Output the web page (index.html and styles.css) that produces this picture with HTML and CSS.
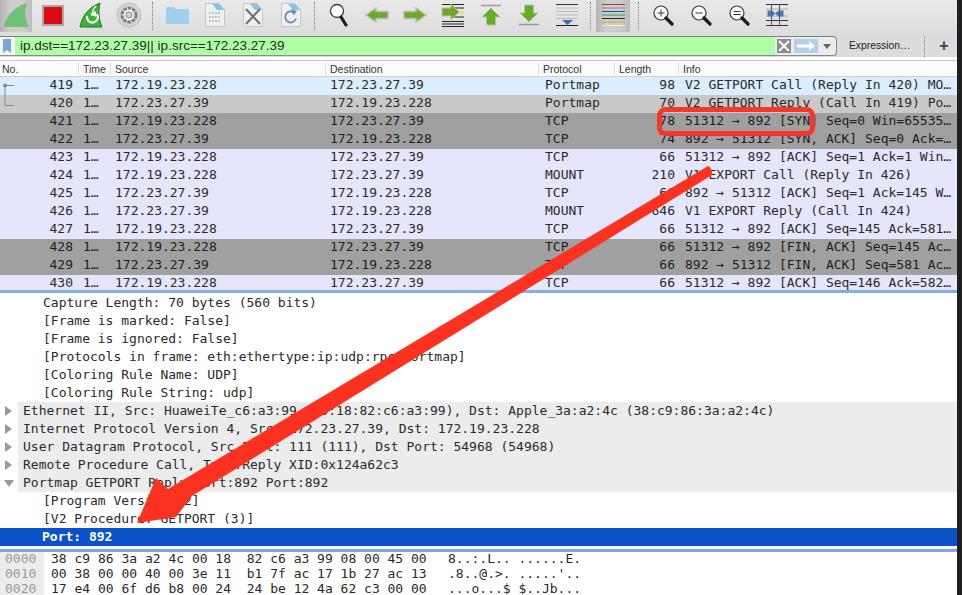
FILE: index.html
```html
<!DOCTYPE html>
<html lang="en">
<head>
<meta charset="utf-8">
<title>Wireshark</title>
<link rel="stylesheet" href="styles.css">
</head>
<body>
<div class="app">
  <div class="toolbar">
    <div class="tool pressed"><svg width="26" height="24" viewBox="0 0 26 24"><path d="M1 24C3 13 11 4 24 0C21 8 22 17 26 24Z" fill="#6fc270" stroke="#9cb59c" stroke-width=".5"/></svg></div>
    <div class="tool"><svg width="22" height="21" viewBox="0 0 22 21"><rect x="1" y="1" width="20" height="19" fill="#dc0b12" stroke="#a8a8a8" stroke-width="2"/></svg></div>
    <div class="tool"><svg width="24" height="26" viewBox="0 0 24 26"><path d="M1 25C3 14 10 5 21 1C19 9 20 18 23 25Z" fill="#34b534" stroke="#2f6f2f"/><path d="M17 4C14 7 13 11 13 14" stroke="#e8f5e8" fill="none" stroke-width="1.500"/><path d="M8 14a5.500 5.500 0 1 0 10-2" fill="none" stroke="#fff" stroke-width="2.200"/><path d="M11 12l5.500-3 1 6z" fill="#fff"/></svg></div>
    <div class="tool"><svg width="26" height="26" viewBox="0 0 26 26"><circle cx="13" cy="13" r="12" fill="#d4d4d4" stroke="#bdbdbd"/><circle cx="13" cy="13" r="7" fill="#efefef" stroke="#7f7f7f" stroke-width="3" stroke-dasharray="3.500 1"/><circle cx="13" cy="13" r="3" fill="#d4d4d4" stroke="#8a8a8a"/></svg></div>
    <div class="sep"></div>
    <div class="tool"><svg width="23" height="17" viewBox="0 0 23 17"><path d="M0 17V1l1-1h7l2 2h12l1 1v14z" fill="#9fd1ee"/></svg></div>
    <div class="tool"><svg width="20" height="24" viewBox="0 0 20 24"><path d="M.5.500h13l6 6v17H.5z" fill="#eff1ef" stroke="#bfc6cc"/><path d="M4 10h12M4 14h12M4 18h12" stroke="#8f9a9a" stroke-dasharray="2 1"/><path d="M7 1h7l5 6h-7z" fill="#86c3e6"/></svg></div>
    <div class="tool"><svg width="20" height="24" viewBox="0 0 20 24"><path d="M.5.500h13l6 6v17H.5z" fill="#eff1ef" stroke="#bfc6cc"/><path d="M7 1h7l5 6h-7z" fill="#86c3e6"/><path d="M3 6l14 15M17 6L3 21" stroke="#6f6f6f" stroke-width="2"/></svg></div>
    <div class="tool"><svg width="20" height="24" viewBox="0 0 20 24"><path d="M.5.500h13l6 6v17H.5z" fill="#eff1ef" stroke="#bfc6cc"/><path d="M7 1h7l5 6h-7z" fill="#86c3e6"/><path d="M15 15.500a5.500 5.500 0 1 1-2-6" fill="none" stroke="#6f8fb8" stroke-width="2"/><path d="M10 6l6 2-3.500 4.500z" fill="#6f8fb8"/></svg></div>
    <div class="sep"></div>
    <div class="tool"><svg width="20" height="24" viewBox="0 0 20 24"><circle cx="8" cy="8" r="6.500" fill="#fff" stroke="#3a3a3a" stroke-width="1.300"/><path d="M12 14l5 8" stroke="#1d1d1d" stroke-width="3.200" stroke-linecap="round"/></svg></div>
    <div class="tool"><svg width="24" height="16" viewBox="0 0 24 16"><path d="M1 8l10-7v3.500h12v7H11V15z" fill="#6aaa24" stroke="#b9bfb0" stroke-width="1.500"/></svg></div>
    <div class="tool"><svg width="24" height="16" viewBox="0 0 24 16"><path d="M23 8L13 1v3.500H1v7h12V15z" fill="#6aaa24" stroke="#b9bfb0" stroke-width="1.500"/></svg></div>
    <div class="tool"><svg width="24" height="24" viewBox="0 0 24 24"><path d="M1 1.500h22M1 18.500h22M1 21h22M1 23.500h22" stroke="#222"/><path d="M11 5h12M11 14h12" stroke="#222"/><path d="M1 13V5h9V1l8 8-8 8v-4z" fill="#6aaa24" stroke="#b9bfb0"/><path d="M18 8h5v3h-5z" fill="#efe27a"/></svg></div>
    <div class="tool"><svg width="22" height="22" viewBox="0 0 22 22"><path d="M1 1.500h20" stroke="#9a9a9a" stroke-width="1.500"/><path d="M11 4l9 9h-4.500v8h-9v-8H2z" fill="#62b022" stroke="#b9bfb0"/></svg></div>
    <div class="tool"><svg width="22" height="22" viewBox="0 0 22 22"><path d="M1 20.500h20" stroke="#9a9a9a" stroke-width="1.500"/><path d="M11 18l9-9h-4.500V1h-9v8H2z" fill="#62b022" stroke="#b9bfb0"/></svg></div>
    <div class="tool"><svg width="22" height="22" viewBox="0 0 22 22"><path d="M0 .500h22" stroke="#333"/><path d="M0 4h22M0 7.500h22M0 11h22M0 14.500h22" stroke="#bcbcbc"/><path d="M0 21.500h22" stroke="#222"/><path d="M6 16h11l-5.500 5z" fill="#3570b0"/></svg></div>
    <div class="sep"></div>
    <div class="tool active"><svg width="23" height="22" viewBox="0 0 23 22"><path d="M0 .500h23" stroke="#c83030"/><path d="M0 4h23" stroke="#8a8a8a"/><path d="M0 7.500h23" stroke="#2848b8"/><path d="M0 11h23" stroke="#28a048"/><path d="M0 14.500h23" stroke="#2a2a2a"/><path d="M0 18h23" stroke="#d8a828"/><path d="M0 21.500h23" stroke="#f4f0c8"/></svg></div>
    <div class="sep"></div>
    <div class="tool"><svg width="21" height="21" viewBox="0 0 21 21"><circle cx="8" cy="8" r="7" fill="#fafafa" stroke="#3a3a3a" stroke-width="1.200"/><path d="M4.500 8h7M8 4.500v7" stroke="#3a3a3a"/><path d="M13 13l6 6" stroke="#1d1d1d" stroke-width="3.200" stroke-linecap="round"/></svg></div>
    <div class="tool"><svg width="21" height="21" viewBox="0 0 21 21"><circle cx="8" cy="8" r="7" fill="#fafafa" stroke="#3a3a3a" stroke-width="1.200"/><path d="M4.500 8h7" stroke="#3a3a3a"/><path d="M13 13l6 6" stroke="#1d1d1d" stroke-width="3.200" stroke-linecap="round"/></svg></div>
    <div class="tool"><svg width="21" height="21" viewBox="0 0 21 21"><circle cx="8" cy="8" r="7" fill="#fafafa" stroke="#3a3a3a" stroke-width="1.200"/><path d="M4.500 6.500h7M4.500 9.500h7" stroke="#3a3a3a"/><path d="M13 13l6 6" stroke="#1d1d1d" stroke-width="3.200" stroke-linecap="round"/></svg></div>
    <div class="tool"><svg width="22" height="22" viewBox="0 0 22 22"><path d="M0 .500h22M0 21.500h22M0 16.500h22" stroke="#333"/><path d="M0 5h22M0 12h22" stroke="#b0b0b0"/><path d="M5.500 0v22M13.500 0v22" stroke="#555"/><path d="M1.500 6.500h3.500v6H1.500zM5.500 6l4 3.500-4 3.500zM13 6l-4 3.500 4 3.500zM13.500 6.500h4v6h-4z" fill="#3570b0" opacity=".9"/></svg></div>
  </div>

  <div class="filterbar">
    <div class="filter-input">
      <span class="bookmark"><svg width="8" height="14" viewBox="0 0 8 14"><path d="M0 0h8v14l-4-3-4 3z" fill="#7ba6d8"/></svg></span>
      <span class="filter-text">ip.dst==172.23.27.39|| ip.src==172.23.27.39</span>
      <span class="clear"><svg width="12" height="12" viewBox="0 0 12 12"><path d="M1 1l10 10M11 1L1 11" stroke="#fff" stroke-width="1.800"/></svg></span>
      <span class="apply"><svg width="20" height="10" viewBox="0 0 20 10"><path d="M1 3.500h12V0l6 5-6 5V6.500H1z" fill="#fff"/></svg></span>
      <span class="drop"><svg width="8" height="5" viewBox="0 0 8 5"><path d="M0 0h8L4 5z" fill="#666"/></svg></span>
    </div>
    <div class="expr">Expression…</div>
    <div class="sep-small"></div>
    <div class="plus">+</div>
  </div>

  <div class="list-head">
    <div class="h-no">No.</div>
    <div class="h-time">Time</div>
    <div class="h-src">Source</div>
    <div class="h-dst">Destination</div>
    <div class="h-proto">Protocol</div>
    <div class="h-len">Length</div>
    <div class="h-info">Info</div>
  </div>

  <div class="packets">
    <div class="row blue"><span class="c-link"><svg width="14" height="18" viewBox="0 0 14 18"><circle cx="5" cy="8.500" r="2" fill="#888"/><path d="M5 8.500h9M5 8.500V18" stroke="#888"/></svg></span><span class="c-no">419</span><span class="c-time">1…</span><span class="c-src">172.19.23.228</span><span class="c-dst">172.23.27.39</span><span class="c-proto">Portmap</span><span class="c-len">98</span><span class="c-info">V2 GETPORT Call (Reply In 420) MO…</span></div>
    <div class="row light"><span class="c-link"><svg width="14" height="18" viewBox="0 0 14 18"><path d="M5 0v10.500h9" fill="none" stroke="#888"/></svg></span><span class="c-no">420</span><span class="c-time">1…</span><span class="c-src">172.23.27.39</span><span class="c-dst">172.19.23.228</span><span class="c-proto">Portmap</span><span class="c-len">70</span><span class="c-info">V2 GETPORT Reply (Call In 419) Po…</span></div>
    <div class="row dark"><span class="c-link"></span><span class="c-no">421</span><span class="c-time">1…</span><span class="c-src">172.19.23.228</span><span class="c-dst">172.23.27.39</span><span class="c-proto">TCP</span><span class="c-len">78</span><span class="c-info">51312 → 892 [SYN] Seq=0 Win=65535…</span></div>
    <div class="row dark"><span class="c-link"></span><span class="c-no">422</span><span class="c-time">1…</span><span class="c-src">172.23.27.39</span><span class="c-dst">172.19.23.228</span><span class="c-proto">TCP</span><span class="c-len">74</span><span class="c-info">892 → 51312 [SYN, ACK] Seq=0 Ack=…</span></div>
    <div class="row lav"><span class="c-link"></span><span class="c-no">423</span><span class="c-time">1…</span><span class="c-src">172.19.23.228</span><span class="c-dst">172.23.27.39</span><span class="c-proto">TCP</span><span class="c-len">66</span><span class="c-info">51312 → 892 [ACK] Seq=1 Ack=1 Win…</span></div>
    <div class="row lav"><span class="c-link"></span><span class="c-no">424</span><span class="c-time">1…</span><span class="c-src">172.19.23.228</span><span class="c-dst">172.23.27.39</span><span class="c-proto">MOUNT</span><span class="c-len">210</span><span class="c-info">V1 EXPORT Call (Reply In 426)</span></div>
    <div class="row lav"><span class="c-link"></span><span class="c-no">425</span><span class="c-time">1…</span><span class="c-src">172.23.27.39</span><span class="c-dst">172.19.23.228</span><span class="c-proto">TCP</span><span class="c-len">66</span><span class="c-info">892 → 51312 [ACK] Seq=1 Ack=145 W…</span></div>
    <div class="row lav"><span class="c-link"></span><span class="c-no">426</span><span class="c-time">1…</span><span class="c-src">172.23.27.39</span><span class="c-dst">172.19.23.228</span><span class="c-proto">MOUNT</span><span class="c-len">646</span><span class="c-info">V1 EXPORT Reply (Call In 424)</span></div>
    <div class="row lav"><span class="c-link"></span><span class="c-no">427</span><span class="c-time">1…</span><span class="c-src">172.19.23.228</span><span class="c-dst">172.23.27.39</span><span class="c-proto">TCP</span><span class="c-len">66</span><span class="c-info">51312 → 892 [ACK] Seq=145 Ack=581…</span></div>
    <div class="row dark"><span class="c-link"></span><span class="c-no">428</span><span class="c-time">1…</span><span class="c-src">172.19.23.228</span><span class="c-dst">172.23.27.39</span><span class="c-proto">TCP</span><span class="c-len">66</span><span class="c-info">51312 → 892 [FIN, ACK] Seq=145 Ac…</span></div>
    <div class="row dark"><span class="c-link"></span><span class="c-no">429</span><span class="c-time">1…</span><span class="c-src">172.23.27.39</span><span class="c-dst">172.19.23.228</span><span class="c-proto">TCP</span><span class="c-len">66</span><span class="c-info">892 → 51312 [FIN, ACK] Seq=581 Ac…</span></div>
    <div class="row lav"><span class="c-link"></span><span class="c-no">430</span><span class="c-time">1…</span><span class="c-src">172.19.23.228</span><span class="c-dst">172.23.27.39</span><span class="c-proto">TCP</span><span class="c-len">66</span><span class="c-info">51312 → 892 [ACK] Seq=146 Ack=582…</span></div>
  </div>

  <div class="details">
    <div class="d-row sub">Capture Length: 70 bytes (560 bits)</div>
    <div class="d-row sub">[Frame is marked: False]</div>
    <div class="d-row sub">[Frame is ignored: False]</div>
    <div class="d-row sub">[Protocols in frame: eth:ethertype:ip:udp:rpc:portmap]</div>
    <div class="d-row sub">[Coloring Rule Name: UDP]</div>
    <div class="d-row sub">[Coloring Rule String: udp]</div>
    <div class="d-row top"><span class="tri"></span><span class="d-text">Ethernet II, Src: HuaweiTe_c6:a3:99 (00:18:82:c6:a3:99), Dst: Apple_3a:a2:4c (38:c9:86:3a:a2:4c)</span></div>
    <div class="d-row top"><span class="tri"></span><span class="d-text">Internet Protocol Version 4, Src: 172.23.27.39, Dst: 172.19.23.228</span></div>
    <div class="d-row top"><span class="tri"></span><span class="d-text">User Datagram Protocol, Src Port: 111 (111), Dst Port: 54968 (54968)</span></div>
    <div class="d-row top"><span class="tri"></span><span class="d-text">Remote Procedure Call, Type:Reply XID:0x124a62c3</span></div>
    <div class="d-row top"><span class="tri open"></span><span class="d-text">Portmap GETPORT Reply Port:892 Port:892</span></div>
    <div class="d-row sub">[Program Version: 2]</div>
    <div class="d-row sub">[V2 Procedure: GETPORT (3)]</div>
    <div class="d-row selected">Port: 892</div>
  </div>

  <div class="hex">
    <div class="hex-row"><span class="offset">0000</span><span class="bytes">38 c9 86 3a a2 4c 00 18  82 c6 a3 99 08 00 45 00</span><span class="ascii">8..:.L.. ......E.</span></div>
    <div class="hex-row"><span class="offset">0010</span><span class="bytes">00 38 00 00 40 00 3e 11  b1 7f ac 17 1b 27 ac 13</span><span class="ascii">.8..@.&gt;. .....'..</span></div>
    <div class="hex-row"><span class="offset">0020</span><span class="bytes">17 e4 00 6f d6 b8 00 24  24 be 12 4a 62 c3 00 00</span><span class="ascii">...o...$ $..Jb...</span></div>
  </div>

  <svg class="overlay" width="957" height="595" viewBox="0 0 957 595">
    <rect x="659.500" y="109.500" width="153" height="24" rx="6" fill="none" stroke="#f5372a" stroke-width="5"/>
    <path d="M708 166Q712 167 712 175L192 496L176 517L137 523L156 478L168 489Z" fill="#fb3220"/>
  </svg>
</div>
</body>
</html>
```
FILE: styles.css
```css
* { box-sizing: border-box; }
html, body { margin: 0; padding: 0; }
body { width: 963px; height: 595px; overflow: hidden; background: #fff; }
.app {
  position: relative;
  width: 962px;
  height: 595px;
  overflow: hidden;
  display: flex;
  flex-direction: column;
  font-family: "DejaVu Sans Mono", monospace;
  font-size: 13px;
  color: #2a2a2a;
  border-right: 5px solid #1f1f1f;
}
.toolbar {
  height: 36px;
  flex: none;
  display: flex;
  align-items: flex-start;
  background: linear-gradient(#e9e9e9, #dcdcdc);
}
.tool {
  width: 38px;
  height: 30px;
  flex: none;
  display: flex;
  align-items: center;
  justify-content: center;
}
.pressed {
  width: 32px;
  height: 32px;
  margin-right: 2px;
  padding: 3px 0 5px;
  background: linear-gradient(90deg, #b4b4b4, #cdcdcd 30%, #cdcdcd 70%, #bcbcbc);
}
.active {
  width: 34px;
  height: 32px;
  margin-right: 4px;
  padding-bottom: 3px;
  background: linear-gradient(90deg, #b4b4b4, #cdcdcd 30%, #cdcdcd 70%, #bcbcbc);
}
.sep {
  width: 1px;
  height: 28px;
  flex: none;
  border-left: 1px dotted #808080;
  margin: 2px 5px 0 4px;
}
.filterbar {
  height: 21px;
  flex: none;
  display: flex;
  align-items: flex-start;
  background: #dcdcdc;
}
.filter-input {
  width: 837px;
  height: 20px;
  flex: none;
  display: flex;
  align-items: center;
  background: #ececec;
  border: 1px solid #8a8a8a;
  border-top-color: #6d8a6d;
  border-left: 0;
  border-radius: 0 4px 4px 0;
  font-family: "Liberation Sans", Arial, sans-serif;
  font-size: 13.500px;
  color: #2a2a2a;
}
.bookmark {
  width: 15px;
  height: 18px;
  flex: none;
  display: flex;
  align-items: center;
  padding-left: 3px;
  background: #f4f4f4;
}
.filter-text {
  width: 760px;
  height: 18px;
  line-height: 18px;
  flex: none;
  padding-left: 5px;
  background: #aeffa6;
  white-space: pre;
}
.clear {
  width: 14px;
  height: 14px;
  margin-left: 2px;
  flex: none;
  background: #8c8c8c;
  display: flex;
  align-items: center;
  justify-content: center;
}
.apply {
  width: 24px;
  height: 14px;
  margin-left: 3px;
  flex: none;
  background: #b4cfee;
  display: flex;
  align-items: center;
  justify-content: center;
}
.drop { flex: 1; display: flex; align-items: center; justify-content: center; }
.expr {
  font-family: "Liberation Sans", Arial, sans-serif;
  font-size: 10.300px;
  line-height: 20px;
  width: 87px;
  flex: none;
  text-align: left;
  padding-left: 12px;
  color: #222;
  white-space: pre;
}
.sep-small {
  width: 1px;
  height: 21px;
  flex: none;
  border-left: 1px dotted #808080;
}
.plus {
  font-family: "Liberation Sans", Arial, sans-serif;
  font-size: 16px;
  line-height: 19px;
  font-weight: bold;
  color: #444;
  width: 32px;
  flex: none;
  padding-left: 6px;
  text-align: center;
}
.list-head {
  margin-top: 3px;
  height: 17px;
  flex: none;
  display: flex;
  align-items: center;
  background: #fbfbfb;
  border-bottom: 1px solid #d0d0d0;
  border-top: 1px solid #c8c8c8;
  font-family: "Liberation Sans", Arial, sans-serif;
  font-size: 10.500px;
  color: #333;
}
.list-head > div { height: 12px; line-height: 12px; border-left: 1px solid #ddd; padding-left: 4px; flex: none; white-space: pre; }
.list-head > .h-no { width: 78px; border-left: 0; padding-left: 2px; }
.list-head > .h-time { width: 32px; }
.list-head > .h-src { width: 215px; }
.list-head > .h-dst { width: 213px; }
.list-head > .h-proto { width: 76px; }
.list-head > .h-len { width: 64px; }
.list-head > .h-info { flex: 1; }
.packets { flex: none; height: 213px; overflow: hidden; }
.row {
  height: 18px;
  line-height: 16px;
  display: flex;
  align-items: flex-start;
  overflow: hidden;
}
.row > span { white-space: pre; }
.blue { background: #dbeeff; }
.light { background: #c9c9c9; }
.dark { background: #a0a0a0; color: #1e1e1e; }
.lav { background: #e5e5fc; }
.c-link { width: 14px; height: 18px; flex: none; }
.c-no { width: 59px; flex: none; text-align: right; }
.c-time { width: 42px; flex: none; padding-left: 10px; }
.c-src { width: 215px; flex: none; }
.c-dst { width: 215px; flex: none; }
.c-proto { width: 70px; flex: none; }
.c-len { width: 60px; flex: none; text-align: right; }
.c-info { flex: 1; padding-left: 10px; }
.details {
  flex: none;
  height: 256px;
  padding-top: 1px;
  border-top: 3px solid #7fb0e8;
  background: #fff;
}
.d-row { height: 18px; line-height: 17px; white-space: pre; }
.sub { padding-left: 43px; }
.top { display: flex; background: #ececec; margin-left: 18px; position: relative; padding-left: 5px; }
.tri {
  position: absolute;
  left: -13px;
  top: 4px;
  width: 0;
  height: 0;
  border-left: 7px solid #9a9a9a;
  border-top: 5px solid transparent;
  border-bottom: 5px solid transparent;
}
.tri.open {
  left: -14px;
  top: 6px;
  border-top: 7px solid #9a9a9a;
  border-left: 5px solid transparent;
  border-right: 5px solid transparent;
  border-bottom: 0;
}
.d-text { flex: 1; overflow: hidden; }
.selected { background: #0a52c8; color: #fff; font-weight: bold; padding-left: 42px; }
.hex {
  flex: none;
  border-top: 3px solid;
  border-image: linear-gradient(#7fa8d8, #a8c8ee) 1;
  margin-top: 3px;
}
.hex-row { height: 15px; line-height: 13px; display: flex; white-space: pre; }
.hex-row:last-child { height: 13px; }
.offset { width: 44px; flex: none; background: #ececec; color: #9a9a9a; padding-left: 5px; }
.bytes { width: 404px; flex: none; padding-left: 7px; }
.ascii { flex: 1; }
.overlay { position: absolute; left: 0; top: 0; pointer-events: none; }
```
